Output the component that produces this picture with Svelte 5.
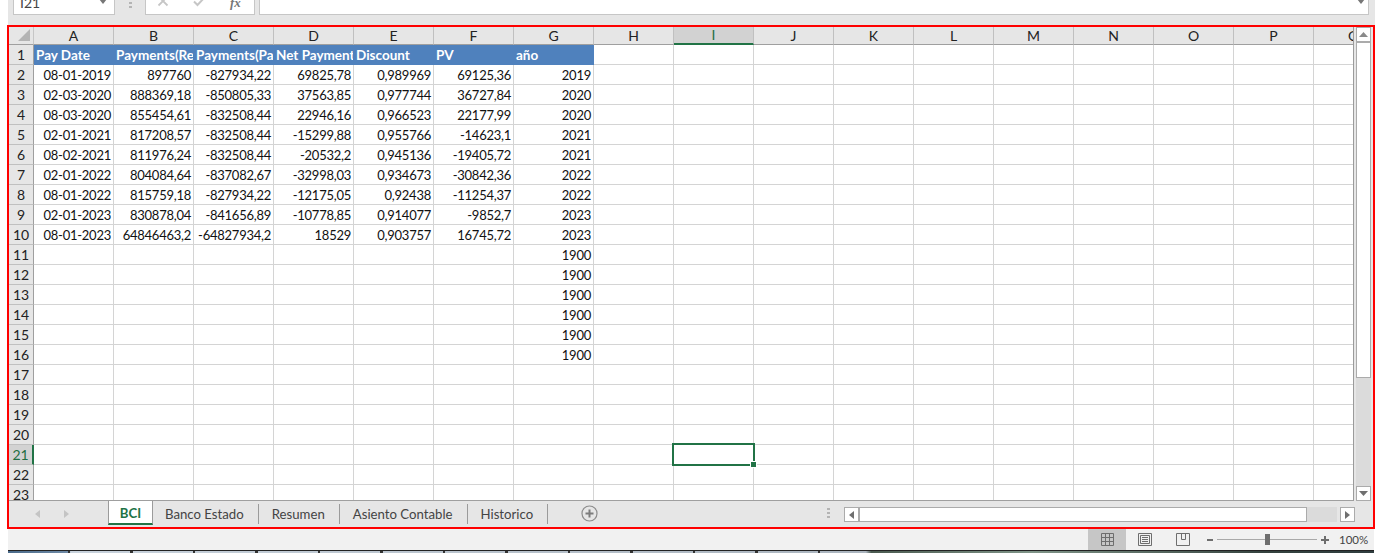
<script>
	const columns = ['A', 'B', 'C', 'D', 'E', 'F', 'G', 'H', 'I', 'J', 'K', 'L', 'M', 'N', 'O', 'P', 'Q'];
	const headers = ['Pay Date', 'Payments(Rec', 'Payments(Pag', 'Net Payment', 'Discount', 'PV', 'año'];
	const data = [
		['08-01-2019', '897760', '-827934,22', '69825,78', '0,989969', '69125,36', '2019'],
		['02-03-2020', '888369,18', '-850805,33', '37563,85', '0,977744', '36727,84', '2020'],
		['08-03-2020', '855454,61', '-832508,44', '22946,16', '0,966523', '22177,99', '2020'],
		['02-01-2021', '817208,57', '-832508,44', '-15299,88', '0,955766', '-14623,1', '2021'],
		['08-02-2021', '811976,24', '-832508,44', '-20532,2', '0,945136', '-19405,72', '2021'],
		['02-01-2022', '804084,64', '-837082,67', '-32998,03', '0,934673', '-30842,36', '2022'],
		['08-01-2022', '815759,18', '-827934,22', '-12175,05', '0,92438', '-11254,37', '2022'],
		['02-01-2023', '830878,04', '-841656,89', '-10778,85', '0,914077', '-9852,7', '2023'],
		['08-01-2023', '64846463,2', '-64827934,2', '18529', '0,903757', '16745,72', '2023']
	];
	const years = ['1900', '1900', '1900', '1900', '1900', '1900'];

	const rows = Array.from({ length: 23 }, (_, i) => i + 1);
	const cellText = (row, col) => {
		if (row === 1) return headers[col] ?? '';
		if (row <= 10) return data[row - 2][col] ?? '';
		if (row <= 16 && col === 6) return years[row - 11];
		return '';
	};
	const tabs = ['Banco Estado', 'Resumen', 'Asiento Contable', 'Historico'];
</script>

<div class="window">
	<div class="formula-bar">
		<div class="name-box">
			<span>I21</span>
			<svg width="8" height="4" viewBox="0 1 8 4"><path d="M0 0h8L4 5z" fill="#777" /></svg>
		</div>
		<div class="dots">
			<svg width="3" height="8" viewBox="0 0 3 8"><path d="M0 1h3v2H0zM0 5h3v2H0z" fill="#b4b4b4" /></svg>
		</div>
		<div class="fx-buttons">
			<svg class="clipped" width="12" height="12" viewBox="0 0 12 12"><path d="M1.5 1.5l9 9M10.5 1.5l-9 9" stroke="#c6c6c6" stroke-width="1.8" fill="none" /></svg>
			<svg class="clipped" width="13" height="12" viewBox="0 0 13 12"><path d="M1 6.5l3.5 3.5L12 2" stroke="#c6c6c6" stroke-width="2" fill="none" /></svg>
			<span class="fx">fx</span>
		</div>
		<div class="formula-input">
			<svg width="8" height="4" viewBox="0 1 8 4"><path d="M0 0h8L4 5z" fill="#777" /></svg>
		</div>
	</div>

	<div class="sheet-frame">
		<div class="sheet-main">
			<div class="grid-area">
				<div class="grid">
					<div class="corner"><span class="corner-mark"></span></div>
					{#each columns as col}
						<div class="col-head" class:active={col === 'I'}>{col}</div>
					{/each}
					{#each rows as row}
						<div class="row-head" class:active={row === 21}>{row}</div>
						{#each columns as col, c}
							<div class="cell" class:head={row === 1 && c < 7}>
								{cellText(row, c)}
								{#if row === 21 && col === 'I'}
									<span class="selection"><span class="handle"></span></span>
								{/if}
							</div>
						{/each}
					{/each}
				</div>
			</div>
			<div class="vscroll">
				<div class="arrow-btn">
					<svg width="9" height="5" viewBox="0 0 9 5"><path d="M0 5h9L4.5 0z" fill="#8a8a8a" /></svg>
				</div>
				<div class="vtrack"><div class="vthumb"></div></div>
				<div class="arrow-btn">
					<svg width="9" height="5" viewBox="0 0 9 5"><path d="M0 0h9L4.5 5z" fill="#6f6f6f" /></svg>
				</div>
			</div>
		</div>

		<div class="tab-bar">
			<div class="tab-nav">
				<svg width="5" height="8" viewBox="0 0 5 8"><path d="M5 0v8L0 4z" fill="#c4c4c4" /></svg>
				<svg width="5" height="8" viewBox="0 0 5 8"><path d="M0 0v8l5-4z" fill="#c4c4c4" /></svg>
			</div>
			<div class="tab current">BCI</div>
			{#each tabs as tab}
				<div class="tab">{tab}</div>
			{/each}
			<div class="add-sheet">
				<svg width="17" height="17" viewBox="0 0 17 17">
					<circle cx="8.5" cy="8.5" r="7.5" fill="none" stroke="#8c8c8c" stroke-width="1.2" />
					<path d="M8.5 4.5v8M4.5 8.5h8" stroke="#7c7c7c" stroke-width="2" />
				</svg>
			</div>
			<div class="tab-dots">
				<svg width="3" height="12" viewBox="0 0 3 12"><path d="M0 1h3v2H0zM0 5h3v2H0zM0 9h3v2H0z" fill="#b4b4b4" /></svg>
			</div>
			<div class="hscroll">
				<div class="h-btn">
					<svg width="5" height="8" viewBox="0 0 5 8"><path d="M5 0v8L0 4z" fill="#6f6f6f" /></svg>
				</div>
				<div class="htrack"><div class="hthumb"></div></div>
				<div class="h-btn last">
					<svg width="5" height="8" viewBox="0 0 5 8"><path d="M0 0v8l5-4z" fill="#6f6f6f" /></svg>
				</div>
			</div>
		</div>
	</div>

	<div class="status-bar">
		<div class="view-btn on">
			<svg width="13" height="13" viewBox="0 0 13 13"><path d="M.5.5h12v12H.5zM4.5.5v12M8.5.5v12M.5 4.5h12M.5 8.5h12" fill="none" stroke="#6e6e6e" /></svg>
		</div>
		<div class="view-btn">
			<svg width="14" height="13" viewBox="0 0 14 13"><path d="M.5.5h13v12H.5zM2.5 2.5h9v8h-9zM4 4.5h6M4 6.5h6M4 8.5h6" fill="none" stroke="#6e6e6e" /></svg>
		</div>
		<div class="view-btn">
			<svg width="14" height="13" viewBox="0 0 14 13"><path d="M.5.5h13v12H.5zM5.5.5v6h4v-6" fill="none" stroke="#6e6e6e" /></svg>
		</div>
		<div class="zoom">
			<span class="zoom-minus"></span>
			<div class="zoom-track"><span class="zoom-knob"></span></div>
			<svg width="8" height="8" viewBox="0 0 8 8"><path d="M4 0v8M0 4h8" stroke="#6e6e6e" stroke-width="2" /></svg>
		</div>
		<div class="zoom-label">100%</div>
	</div>
	<div class="desktop-strip"></div>
</div>

<style>
	:global(body) {
		margin: 0;
		background: #fff;
	}

	.window {
		width: 1382px;
		height: 553px;
		overflow: hidden;
		display: flex;
		flex-direction: column;
		font-family: Lato, 'Open Sans', sans-serif;
		color: #111;
	}

	.formula-bar {
		height: 25px;
		flex: none;
		width: 1367px;
		margin-left: 8px;
		display: flex;
		align-items: flex-start;
		padding-left: 5px;
		box-sizing: border-box;
		background: #e6e6e6;
	}

	.name-box {
		width: 102px;
		height: 15px;
		box-sizing: border-box;
		background: #fff;
		border: 1px solid #c6c6c6;
		border-top: 0;
		display: flex;
		justify-content: space-between;
		align-items: flex-start;
		padding: 0 7px 0 6px;
		font-size: 14px;
		line-height: 6px;
		overflow: hidden;
		color: #444;
	}

	.dots {
		width: 30px;
		padding-top: 1px;
		display: flex;
		justify-content: center;
	}

	.fx-buttons {
		width: 110px;
		height: 15px;
		box-sizing: border-box;
		background: #fff;
		border: 1px solid #c6c6c6;
		border-top: 0;
		display: flex;
		align-items: flex-start;
		gap: 24px;
		padding-left: 11px;
		overflow: hidden;
	}

	.clipped {
		margin-top: -5px;
		flex: none;
	}

	.fx {
		font-family: 'Liberation Serif', serif;
		font-style: italic;
		font-weight: bold;
		font-size: 13px;
		line-height: 6px;
		color: #777;
	}

	.formula-input {
		width: 1110px;
		margin-left: 4px;
		height: 15px;
		box-sizing: border-box;
		background: #fff;
		border: 1px solid #c6c6c6;
		border-top: 0;
		display: flex;
		justify-content: flex-end;
		align-items: flex-start;
		padding-right: 3px;
	}

	.sheet-frame {
		width: 1368px;
		height: 504px;
		margin-left: 7px;
		box-sizing: border-box;
		border: 2px solid #ff0000;
		flex: none;
		display: flex;
		flex-direction: column;
		background: #e6e6e6;
	}

	.sheet-main {
		height: 474px;
		flex: none;
		display: flex;
	}

	.grid-area {
		width: 1345px;
		flex: none;
		overflow: hidden;
		border-right: 1px solid #9b9b9b;
		border-bottom: 1px solid #9f9f9f;
		background: #fff;
		box-sizing: border-box;
	}

	.grid {
		display: grid;
		grid-template-columns: 25px repeat(17, 80px);
		grid-template-rows: 18px repeat(23, 20px);
	}

	.corner,
	.col-head,
	.row-head {
		background: #e6e6e6;
		box-sizing: border-box;
		display: flex;
		align-items: center;
		justify-content: center;
		font-size: 14px;
		color: #222;
	}

	.corner {
		position: relative;
		border-bottom: 1px solid #9f9f9f;
		border-right: 1px solid #c6c6c6;
	}

	.corner-mark {
		position: absolute;
		right: 3px;
		bottom: 3px;
		width: 0;
		height: 0;
		border-left: 12px solid transparent;
		border-bottom: 12px solid #b4b4b4;
	}

	.col-head {
		border-right: 1px solid #c0c0c0;
		border-bottom: 1px solid #9f9f9f;
		padding-bottom: 1px;
	}

	.col-head.active {
		background: #d2d2d2;
		color: #1f6e43;
		border-bottom: 2px solid #217346;
	}

	.row-head {
		border-right: 1px solid #9f9f9f;
		border-bottom: 1px solid #c0c0c0;
	}

	.row-head.active {
		background: #d2d2d2;
		color: #1f6e43;
		border-right: 2px solid #217346;
	}

	.cell {
		position: relative;
		box-sizing: border-box;
		border-right: 1px solid #d4d4d4;
		border-bottom: 1px solid #d4d4d4;
		font-size: 13px;
		letter-spacing: -0.25px;
		line-height: 19px;
		padding: 1px 2px 0 3px;
		text-align: right;
		white-space: nowrap;
		overflow: hidden;
		background: #fff;
		color: #111;
	}

	.cell.head {
		background: #4f81bd;
		color: #fff;
		font-size: 13.5px;
		letter-spacing: 0;
		font-weight: bold;
		border-color: #4f81bd;
		padding-left: 2px;
		text-align: left;
	}

	.grid > .cell:has(.selection) {
		overflow: visible;
		z-index: 2;
	}

	.selection {
		position: absolute;
		left: -2px;
		top: -2px;
		width: 83px;
		height: 23px;
		box-sizing: border-box;
		border: 2px solid #217346;
	}

	.handle {
		position: absolute;
		right: -4px;
		bottom: -4px;
		width: 5px;
		height: 5px;
		background: #217346;
		border: 1px solid #fff;
	}

	.vscroll {
		flex: none;
		width: 15px;
		margin-left: 2px;
		display: flex;
		flex-direction: column;
	}

	.arrow-btn {
		height: 15px;
		flex: none;
		box-sizing: border-box;
		background: #fff;
		border: 1px solid #ababab;
		display: flex;
		align-items: center;
		justify-content: center;
	}

	.vtrack {
		flex: 1;
		background: #dbdbdb;
	}

	.vthumb {
		height: 336px;
		box-sizing: border-box;
		background: #fff;
		border: 1px solid #ababab;
	}

	.tab-bar {
		height: 26px;
		flex: none;
		display: flex;
		align-items: flex-start;
		background: #e6e6e6;
		font-size: 13.2px;
		color: #444;
	}

	.tab-nav {
		width: 99px;
		height: 25px;
		box-sizing: border-box;
		display: flex;
		align-items: center;
		gap: 24px;
		padding-left: 26px;
	}

	.tab {
		height: 20px;
		margin-top: 3px;
		line-height: 20px;
		padding: 0 14px 0 13px;
		box-sizing: border-box;
		border-right: 1px solid #9b9b9b;
		color: #444;
		white-space: nowrap;
	}

	.tab.current + .tab {
		padding-left: 12px;
	}

	.tab.current {
		height: 24px;
		width: 45px;
		margin-top: 0;
		padding: 0;
		text-align: center;
		line-height: 24px;
		background: #fff;
		color: #217346;
		font-weight: bold;
		border-left: 1px solid #9b9b9b;
		border-right: 1px solid #9b9b9b;
		border-bottom: 2px solid #217346;
	}

	.add-sheet {
		margin-left: 33px;
		margin-top: 4px;
		line-height: 0;
	}

	.tab-dots {
		margin-left: auto;
		margin-top: 6px;
		line-height: 0;
	}

	.hscroll {
		margin-left: 14px;
		margin-right: 18px;
		margin-top: 6px;
		width: 511px;
		height: 15px;
		display: flex;
	}

	.h-btn {
		width: 15px;
		height: 15px;
		flex: none;
		box-sizing: border-box;
		background: #fff;
		border: 1px solid #ababab;
		display: flex;
		align-items: center;
		justify-content: center;
	}

	.h-btn.last {
		margin-left: 3px;
	}

	.htrack {
		flex: 1;
		background: #dbdbdb;
	}

	.hthumb {
		width: 448px;
		height: 15px;
		box-sizing: border-box;
		background: #fff;
		border: 1px solid #ababab;
	}

	.status-bar {
		height: 21px;
		flex: none;
		width: 1366px;
		margin-left: 8px;
		display: flex;
		align-items: center;
		background: #f1f1f1;
		padding-left: 1080px;
		box-sizing: border-box;
		font-size: 11.5px;
		color: #444;
	}

	.view-btn {
		width: 38px;
		height: 21px;
		display: flex;
		align-items: center;
		justify-content: center;
		line-height: 0;
	}

	.view-btn.on {
		background: #c6c6c6;
	}

	.zoom {
		display: flex;
		align-items: center;
		margin-left: 5px;
		gap: 4px;
		line-height: 0;
	}

	.zoom-minus {
		width: 6px;
		height: 2px;
		background: #6e6e6e;
	}

	.zoom-track {
		position: relative;
		width: 100px;
		height: 1px;
		background: #a9a9a9;
	}

	.zoom-knob {
		position: absolute;
		left: 48px;
		top: -5px;
		width: 5px;
		height: 11px;
		background: #6e6e6e;
	}

	.zoom-label {
		margin-left: 10px;
	}

	.desktop-strip {
		flex: 1;
		width: 1366px;
		margin-left: 8px;
		box-sizing: border-box;
		border-top: 1px solid #222;
		background:
			repeating-linear-gradient(90deg, transparent 0 60px, #333 60px 62.5px) 0 0 / 864px 100% no-repeat,
			linear-gradient(90deg, #4a6a8a, #6f8aa6 4.4%, #c8d2dc 4.6%, #aab4be 62.8%, #4a5a50 63.2%, #7f9488 75%, #34423e 92%, #2f3d3f);
	}
</style>
